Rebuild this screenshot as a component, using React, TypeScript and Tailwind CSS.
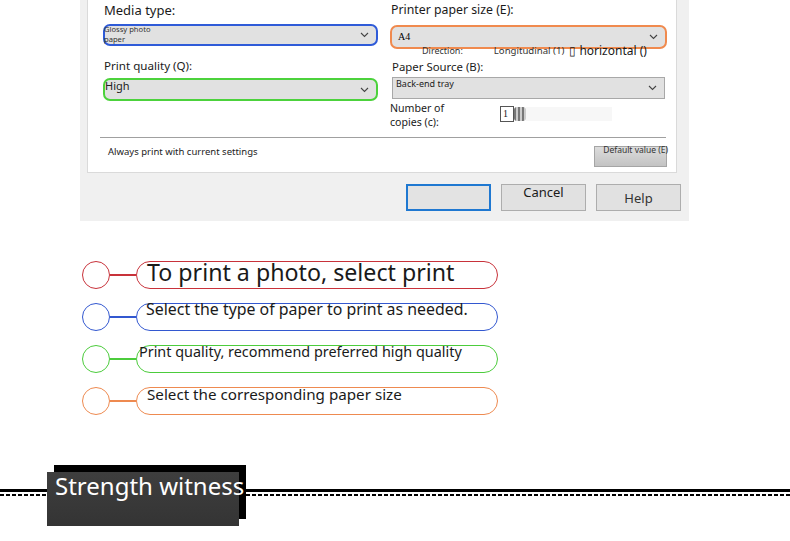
import React from 'react';

const font = { fontFamily: '"Noto Sans", "Open Sans", sans-serif' };

function Chevron() {
  return (
    <svg width="9" height="6" viewBox="0 0 9 6" className="shrink-0 self-center">
      <path d="M1 1l3.5 3.5L8 1" fill="none" stroke="#444" strokeWidth="1.1" />
    </svg>
  );
}

function Select({ ring, className, children }: { ring: string; className: string; children: React.ReactNode }) {
  return (
    <div className={`flex items-center justify-between bg-[#e1e1e1] pr-[7px] ${ring} ${className}`}>
      <div className="min-w-0">{children}</div>
      <Chevron />
    </div>
  );
}

const steps = [
  { color: 'border-[#c8323a]', line: 'bg-[#c8323a]', text: 'To print a photo, select print', cls: 'text-[23.2px] pl-[10px] -mt-[6px]' },
  { color: 'border-[#3358d0]', line: 'bg-[#3358d0]', text: 'Select the type of paper to print as needed.', cls: 'text-[15.9px] pl-[9px] -mt-[14px]' },
  { color: 'border-[#4ccc3c]', line: 'bg-[#4ccc3c]', text: 'Print quality, recommend preferred high quality', cls: 'text-[14.4px] pl-[2px] -mt-[14px]' },
  { color: 'border-[#ee8a50]', line: 'bg-[#ee8a50]', text: 'Select the corresponding paper size', cls: 'text-[15.2px] pl-[10px] -mt-[13px]' },
];

export default function App() {
  return (
    <div className="w-[790px] h-[541px] bg-white overflow-hidden text-[#1a1a1a]" style={font}>
      {/* Print settings dialog */}
      <div className="ml-[80px] w-[609px] h-[221px] bg-[#f0f0f0] pl-[7px]">
        <div className="w-[590px] h-[173px] bg-white border-x border-b border-[#dadada] pt-px">
          <div className="flex h-[130px]">
            {/* left column */}
            <div className="ml-[15px] w-[275px]">
              <div className="h-[18px] text-[13px] leading-[18px] ml-px">Media type:</div>
              <Select ring="border-2 border-[#2f5bd8] rounded-[7px]" className="mt-[5px] h-[22px]">
                <div className="text-[7.6px] leading-[9.5px] text-[#333] -ml-[1px] -mt-[1px]">Glossy photo<br />paper</div>
              </Select>
              <div className="mt-[11px] h-[18px] text-[11.6px] leading-[18px] ml-[1px]">Print quality (Q):</div>
              <Select ring="border-2 border-[#4cd23c] rounded-[7px]" className="mt-[3px] h-[23px] items-start">
                <div className="text-[11px] leading-[13px] -mt-[1px] text-[#222]">High</div>
              </Select>
            </div>
            {/* right column */}
            <div className="ml-[12px] w-[277px] relative">
              <div className="h-[18px] text-[12.3px] leading-[18px] ml-[1px]">Printer paper size (E):</div>
              <Select ring="border-2 border-[#f08a4e] rounded-[7px]" className="mt-[6px] h-[24px]">
                <div className="pl-[6px] text-[10px] leading-[12px] text-black" style={{ fontFamily: '"Liberation Serif", serif' }}>A4</div>
              </Select>
              <div className="flex items-center h-[12px] -mt-[4px]">
                <span className="ml-[32px] text-[9px] text-[#333]">Direction:</span>
                <span className="ml-[31px] text-[9.6px] text-[#333]">Longitudinal (1)</span>
                <span className="ml-[5px] text-[12px] leading-[12px]">▯ horizontal ()</span>
              </div>
              <div className="mt-[1px] h-[18px] text-[11.4px] leading-[18px] ml-[2px]">Paper Source (B):</div>
              <Select ring="border border-[#a8a8a8]" className="mt-[1px] ml-[2px] w-[273px] h-[22px] items-start">
                <div className="pl-[3px] text-[9px] leading-[12px] text-[#222]">Back-end tray</div>
              </Select>
              <div className="flex items-start mt-[2px]">
                <div className="text-[10.6px] leading-[14px] w-[110px]">Number of<br />copies (c):</div>
                <div className="mt-[5px] flex items-center">
                  <div className="w-[14px] h-[16px] border border-[#555] text-[10px] leading-[14px] pl-[2px]" style={{ fontFamily: '"Liberation Serif", serif' }}>1</div>
                  <div className="w-[12px] h-[14px] rounded-[3px] bg-[repeating-linear-gradient(90deg,#777_0_2px,#ccc_2px_4px)]" />
                  <div className="w-[86px] h-[14px] bg-[#f7f7f7]" />
                </div>
              </div>
            </div>
          </div>
          <div className="ml-[12px] w-[566px] h-px bg-[#a0a0a0] mt-[6px]" />
          <div className="flex items-start justify-between pl-[20px] pr-[10px] mt-[7px]">
            <div className="text-[9.5px] leading-[14px] text-[#222]">Always print with current settings</div>
            <div className="w-[73px] h-[21px] mt-px border border-[#a5a5a5] bg-[linear-gradient(#dcdcdc,#c3c3c3)] text-[8.5px] leading-[9px] text-[#333] text-right -mr-[1px]">
              <span className="-mr-[2px] -mt-[2px] block">Default value (E)</span>
            </div>
          </div>
        </div>
        {/* dialog buttons */}
        <div className="flex gap-[10px] ml-[319px] mt-[11px]">
          <div className="w-[85px] h-[27px] border-2 border-[#1f78d1] bg-[#e3e3e3]" />
          <div className="w-[85px] h-[27px] border border-[#adadad] bg-[#e1e1e1] text-[13px] leading-[14px] text-center">Cancel</div>
          <div className="w-[85px] h-[27px] border border-[#adadad] bg-[#e1e1e1] text-[13px] leading-[26px] text-center text-[#333]">Help</div>
        </div>
      </div>

      {/* legend */}
      <div className="ml-[82px] mt-[40px] flex flex-col gap-[14px]">
        {steps.map((s) => (
          <div key={s.text} className="flex items-center h-[28px]">
            <div className={`w-[28px] h-[28px] rounded-full border-[1.5px] ${s.color} shrink-0`} />
            <div className={`w-[26px] h-[1.5px] ${s.line}`} />
            <div className={`w-[362px] h-[28px] rounded-full border-[1.5px] ${s.color} flex items-center`}>
              <span className={`whitespace-nowrap text-[#1a1a1a] ${s.cls}`}>{s.text}</span>
            </div>
          </div>
        ))}
      </div>

      {/* section heading */}
      <div className="relative mt-[50px] h-[75px]">
        <div className="pt-[24px]">
          <div className="h-[3px] bg-black" />
          <div className="mt-[2px] h-[2px] bg-[repeating-linear-gradient(90deg,#000_0_4px,transparent_4px_6px)]" />
        </div>
        <div className="absolute left-[54px] top-0 w-[192px] h-[54px] bg-black" />
        <div className="absolute left-[47px] top-[7px] w-[192px] h-[54px] bg-[linear-gradient(#3e3e3e,#343434)]" />
        <div className="absolute left-[55px] top-[6px] text-[24px] leading-[30px] text-white whitespace-nowrap">Strength witness</div>
      </div>
    </div>
  );
}
